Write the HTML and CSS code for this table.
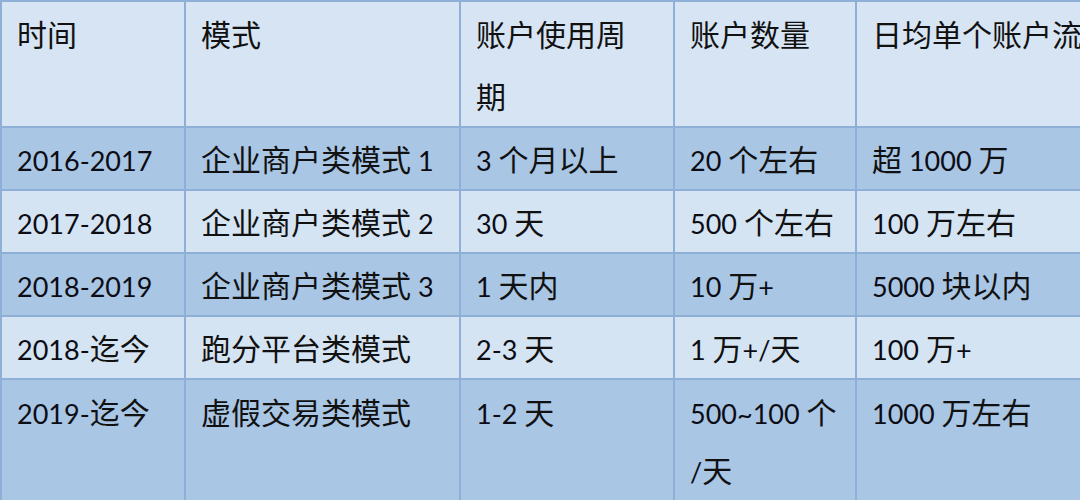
FILE: index.html
```html
<!DOCTYPE html>
<html lang="zh-CN">
<head>
<meta charset="utf-8">
<link rel="stylesheet" href="styles.css">
</head>
<body>
<table class="grid">
  <colgroup>
    <col class="c1"><col class="c2"><col class="c3"><col class="c4"><col class="c5">
  </colgroup>
  <tr class="head">
    <td>时间</td><td>模式</td><td>账户使用周<br>期</td><td>账户数量</td><td class="nowrap">日均单个账户流水</td>
  </tr>
  <tr class="dark">
    <td><span class="n">2016-2017</span></td><td>企业商户类模式<span class="n"> 1</span></td><td><span class="n">3 </span>个月以上</td><td><span class="n">20 </span>个左右</td><td>超<span class="n"> 1000 </span>万</td>
  </tr>
  <tr class="light">
    <td><span class="n">2017-2018</span></td><td>企业商户类模式<span class="n"> 2</span></td><td><span class="n">30 </span>天</td><td><span class="n">500 </span>个左右</td><td><span class="n">100 </span>万左右</td>
  </tr>
  <tr class="dark">
    <td><span class="n">2018-2019</span></td><td>企业商户类模式<span class="n"> 3</span></td><td><span class="n">1 </span>天内</td><td><span class="n">10 </span>万<span class="n">+</span></td><td><span class="n">5000 </span>块以内</td>
  </tr>
  <tr class="light">
    <td><span class="n">2018-</span>迄今</td><td>跑分平台类模式</td><td><span class="n">2-3 </span>天</td><td><span class="n">1 </span>万<span class="n">+/</span>天</td><td><span class="n">100 </span>万<span class="n">+</span></td>
  </tr>
  <tr class="dark last">
    <td><span class="n">2019-</span>迄今</td><td>虚假交易类模式</td><td><span class="n">1-2 </span>天</td><td><span class="n">500~100 </span>个<br><span class="n">/</span>天</td><td><span class="n">1000 </span>万左右</td>
  </tr>
</table>
</body>
</html>
```
FILE: styles.css
```css
html, body {
  margin: 0;
  padding: 0;
  width: 1080px;
  height: 500px;
  overflow: hidden;
  background: #a9c6e4;
}
.grid {
  border-collapse: collapse;
  table-layout: fixed;
  width: 1160px;
  font-family: "Noto Sans CJK SC", sans-serif;
  font-size: 30px;
  color: #111;
}
.n {
  font-family: "Lato", "Noto Sans CJK SC", sans-serif;
  font-size: 27px;
  line-height: 1;
  color: #0c0c14;
}
.c1 { width: 184px; }
.c2 { width: 275px; }
.c3 { width: 214px; }
.c4 { width: 182px; }
.c5 { width: 305px; }
.grid td {
  border: 2px solid #8fb0d6;
  padding: 0 6px 0 15px;
  line-height: 61px;
  height: 61px;
  vertical-align: top;
}
.head td { background: #d6e4f3; line-height: 62px; height: 123px; }
.light td { background: #d5e4f3; }
.dark td { background: #a9c6e4; }
.last td { height: 150px; line-height: 58px; padding-top: 2px; }
.nowrap { white-space: nowrap; overflow: hidden; }
```
